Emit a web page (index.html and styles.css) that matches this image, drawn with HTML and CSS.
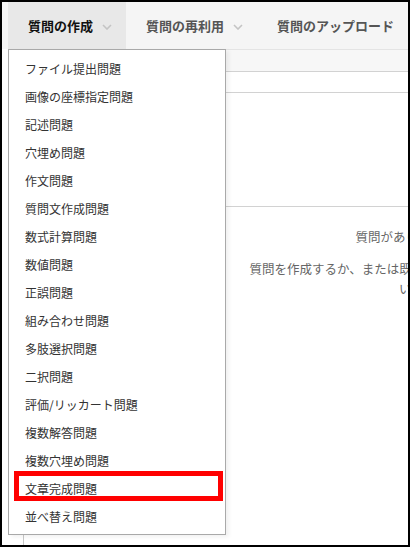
FILE: index.html
```html
<!DOCTYPE html>
<html lang="ja">
  <head>
    <meta charset="UTF-8" />
    <meta name="viewport" content="width=device-width, initial-scale=1.0" />
    <title>質問の作成</title>
    <link rel="stylesheet" href="styles.css">
  </head>
  <body>
    <div class="frame">
      <nav class="tabs">
        <div class="tab active">
          <span>質問の作成</span>
          <svg class="chevron" width="10" height="6" viewBox="0 0 10 6"><polyline points="1,1 5,5 9,1" /></svg>
        </div>
        <div class="tab">
          <span>質問の再利用</span>
          <svg class="chevron" width="10" height="6" viewBox="0 0 10 6"><polyline points="1,1 5,5 9,1" /></svg>
        </div>
        <div class="tab">
          <span>質問のアップロード</span>
        </div>
      </nav>

      <!-- Question list panel (behind the dropdown) -->
      <div class="panel">
        <div class="panel-toolbar"></div>
        <div class="panel-row"></div>
        <div class="panel-area"></div>
        <div class="empty-state">
          <p class="empty-title">質問がありません。</p>
          <p class="empty-text">質問を作成するか、または既存の質問を再利用してください。</p>
        </div>
      </div>

      <!-- Create question menu -->
      <ul class="dropdown">
        <li>ファイル提出問題</li>
        <li>画像の座標指定問題</li>
        <li>記述問題</li>
        <li>穴埋め問題</li>
        <li>作文問題</li>
        <li>質問文作成問題</li>
        <li>数式計算問題</li>
        <li>数値問題</li>
        <li>正誤問題</li>
        <li>組み合わせ問題</li>
        <li>多肢選択問題</li>
        <li>二択問題</li>
        <li>評価/リッカート問題</li>
        <li>複数解答問題</li>
        <li>複数穴埋め問題</li>
        <li class="marked">文章完成問題</li>
        <li>並べ替え問題</li>
      </ul>
    </div>
  </body>
</html>
```

FILE: styles.css
```css
/* General Reset */
*,
*::before,
*::after {
  margin: 0;
  padding: 0;
  box-sizing: border-box;
}

body {
  font-family: "Noto Sans CJK JP", "Noto Sans", sans-serif;
  background: #fff;
  color: #333;
}

.frame {
  position: relative;
  width: 410px;
  height: 547px;
  border: 2px solid #000;
  overflow: hidden;
  background: #fff;
}

/* Top tabs */
.tabs {
  display: flex;
  height: 47px;
  padding-left: 6px;
  background: #f5f5f5;
}

.tab {
  display: flex;
  align-items: center;
  gap: 9px;
  padding: 0 14px 0 20px;
  font-size: 13px;
  font-weight: 700;
  color: #555;
  white-space: nowrap;
}

.tab.active {
  background: #e8e8e8;
  color: #111;
}

.chevron {
  margin-top: 2px;
}

.chevron polyline {
  fill: none;
  stroke: #c4c4c4;
  stroke-width: 1.6;
}

/* Panel behind the menu */
.panel {
  width: 776px;
  margin-left: 21px;
  height: 496px;
  border-left: 1px solid #c8c8c8;
  border-top: 1px solid #e4e4e4;
}

.panel-toolbar {
  height: 22px;
  background: #f7f7f7;
  border-bottom: 1px solid #d2d2d2;
}

.panel-row {
  height: 21px;
  border-bottom: 1px solid #d2d2d2;
}

.panel-area {
  height: 114px;
  border-bottom: 1px solid #d2d2d2;
}

.empty-state {
  padding-top: 20px;
  text-align: center;
  color: #666;
  font-size: 12.5px;
  line-height: 20px;
}

.empty-text {
  max-width: 330px;
  margin: 12px auto 0;
}

/* Dropdown menu */
.dropdown {
  position: absolute;
  top: 47px;
  left: 6px;
  width: 218px;
  padding: 5px 0 3px;
  list-style: none;
  background: #fff;
  border: 1px solid #a9a9a9;
  box-shadow: 3px 2px 4px rgba(0, 0, 0, 0.06);
}

.dropdown li {
  position: relative;
  height: 28px;
  line-height: 28px;
  padding-left: 16px;
  font-size: 12px;
  color: #333;
  white-space: nowrap;
}

/* Red annotation around the selected item */
.dropdown li.marked::after {
  content: '';
  position: absolute;
  top: -4px;
  left: 5px;
  width: 209px;
  height: 30px;
  border: 5px solid #ff0000;
}
```
